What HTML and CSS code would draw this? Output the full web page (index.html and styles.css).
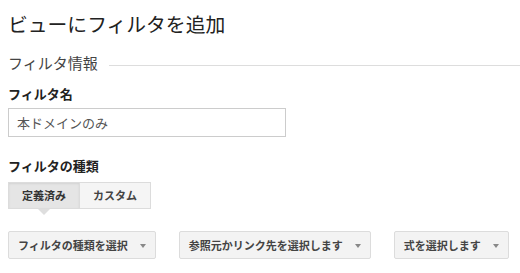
FILE: index.html
```html
<!DOCTYPE html>
<html lang="ja">
<head>
<meta charset="utf-8">
<title>ビューにフィルタを追加</title>
<link rel="stylesheet" href="styles.css">
</head>
<body>
<div class="page">
  <h1 class="title">ビューにフィルタを追加</h1>
  <div class="section-head">
    <span class="section-text">フィルタ情報</span>
    <span class="section-line"></span>
  </div>
  <div class="label label-name">フィルタ名</div>
  <div class="input">本ドメインのみ</div>
  <div class="label label-type">フィルタの種類</div>
  <div class="toggle">
    <span class="tbtn tbtn-on">定義済み</span>
    <span class="tbtn">カスタム</span>
  </div>
  <div class="selects">
    <span class="dd">フィルタの種類を選択<span class="arrow"></span></span>
    <span class="dd">参照元かリンク先を選択します<span class="arrow"></span></span>
    <span class="dd">式を選択します<span class="arrow"></span></span>
  </div>
</div>
</body>
</html>
```
FILE: styles.css
```css
html, body {
  margin: 0;
  padding: 0;
  background: #fff;
}
body {
  font-family: "Noto Sans CJK JP", "Noto Sans", sans-serif;
  color: #222;
}
.page {
  padding: 0 8px;
  display: flex;
  flex-direction: column;
  align-items: flex-start;
}
.title {
  margin: 11px 0 0;
  font-size: 19.8px;
  line-height: 26px;
  font-weight: normal;
  color: #222;
}
.section-head {
  align-self: stretch;
  margin-top: 16px;
  margin-right: -8px;
  display: flex;
  align-items: center;
  height: 20px;
}
.section-text {
  font-size: 15px;
  line-height: 20px;
  color: #444;
}
.section-line {
  flex: 1;
  height: 1px;
  background: #ddd;
  margin-left: 11px;
  margin-top: 5px;
}
.label {
  font-size: 13px;
  line-height: 18px;
  font-weight: bold;
  color: #222;
}
.label-name {
  margin-top: 12px;
}
.input {
  margin-top: 5px;
  box-sizing: border-box;
  width: 278px;
  height: 29px;
  border: 1px solid #ccc;
  padding: 0 8px;
  font-size: 13px;
  line-height: 27px;
  color: #555;
}
.label-type {
  margin-top: 20px;
}
.toggle {
  margin-top: 7px;
  display: flex;
}
.tbtn {
  position: relative;
  box-sizing: border-box;
  height: 27px;
  padding: 0 13px;
  font-size: 11px;
  line-height: 25px;
  font-weight: bold;
  color: #444;
  background: #f5f5f5;
  border: 1px solid #dcdcdc;
}
.tbtn + .tbtn {
  border-left: none;
}
.tbtn-on {
  background: #e5e5e5;
  box-shadow: inset 0 1px 2px rgba(0, 0, 0, 0.08);
  color: #333;
}
.tbtn-on::after {
  content: "";
  position: absolute;
  left: 50%;
  top: 26px;
  margin-left: -6px;
  border-top: 6px solid #dedede;
  border-left: 6px solid transparent;
  border-right: 6px solid transparent;
}
.selects {
  margin-top: 22px;
  display: flex;
  gap: 23px;
}
.dd {
  box-sizing: border-box;
  height: 28px;
  display: flex;
  align-items: center;
  padding: 0 9px;
  font-size: 11px;
  font-weight: bold;
  color: #444;
  background: #f3f3f3;
  border: 1px solid #dcdcdc;
  border-radius: 2px;
}
.arrow {
  margin-left: 12px;
  margin-top: 2px;
  width: 0;
  height: 0;
  border-top: 4px solid #888;
  border-left: 3.5px solid transparent;
  border-right: 3.5px solid transparent;
}
```
